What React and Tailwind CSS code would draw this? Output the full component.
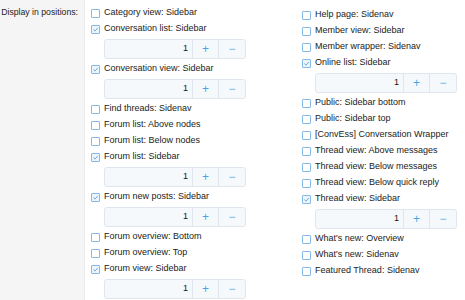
import React from 'react';

const leftItems = [
  { label: 'Category view: Sidebar' },
  { label: 'Conversation list: Sidebar', checked: true },
  { label: 'Conversation view: Sidebar', checked: true },
  { label: 'Find threads: Sidenav' },
  { label: 'Forum list: Above nodes' },
  { label: 'Forum list: Below nodes' },
  { label: 'Forum list: Sidebar', checked: true },
  { label: 'Forum new posts: Sidebar', checked: true },
  { label: 'Forum overview: Bottom' },
  { label: 'Forum overview: Top' },
  { label: 'Forum view: Sidebar', checked: true },
];

const rightItems = [
  { label: 'Help page: Sidenav' },
  { label: 'Member view: Sidebar' },
  { label: 'Member wrapper: Sidenav' },
  { label: 'Online list: Sidebar', checked: true },
  { label: 'Public: Sidebar bottom' },
  { label: 'Public: Sidebar top' },
  { label: '[ConvEss] Conversation Wrapper' },
  { label: 'Thread view: Above messages' },
  { label: 'Thread view: Below messages' },
  { label: 'Thread view: Below quick reply' },
  { label: 'Thread view: Sidebar', checked: true },
  { label: "What's new: Overview" },
  { label: "What's new: Sidenav" },
  { label: 'Featured Thread: Sidenav' },
];

function Checkbox({ checked }) {
  return (
    <span className={`w-[9px] h-[9px] shrink-0 flex items-center justify-center rounded-[1px] border border-[#86b9e3] ${checked ? 'bg-[#edf5fc]' : 'bg-white'}`}>
      {checked && (
        <svg width="7" height="7" viewBox="0 0 10 10" fill="none" stroke="#5aa3dc" strokeWidth="1.3">
          <path d="M2 5.2 L4.2 7.3 L8.2 2.8" />
        </svg>
      )}
    </span>
  );
}

function Spinner() {
  return (
    <div className="mt-[2px] mb-[2px] ml-[13px] h-[20px] w-[142px] flex rounded-[3px] border border-[#dfe6ee] bg-[#f6f9fc]">
      <div className="flex-1 flex items-center justify-end pr-[4px] text-[#141414]">1</div>
      <div className="w-[26px] flex items-center justify-center border-l border-[#dfe6ee] text-[#47a6e6] text-[12px]">+</div>
      <div className="w-[27px] flex items-center justify-center border-l border-[#dfe6ee] text-[#6fb5e8] text-[12px]">−</div>
    </div>
  );
}

function Item({ label, checked }) {
  return (
    <div>
      <div className="h-[16px] flex items-center gap-[4px]">
        <Checkbox checked={checked} />
        <span className="text-[#222] whitespace-nowrap">{label}</span>
      </div>
      {checked && <Spinner />}
    </div>
  );
}

export default function App() {
  return (
    <div className="w-[465px] h-[300px] flex bg-white text-[9px] overflow-hidden" style={{ fontFamily: '"Liberation Sans", Arial, sans-serif' }}>
      <div className="w-[85px] shrink-0 bg-[#f5f5f5] border-r border-[#ebebeb] text-right pr-[6px] pt-[6px] text-[8.7px] text-[#222] whitespace-nowrap">
        Display in positions:
      </div>
      <div className="flex-1 flex pl-[6px]">
        <div className="w-[211px] pt-[5px]">
          {leftItems.map((it) => <Item key={it.label} {...it} />)}
        </div>
        <div className="flex-1 pt-[7px]">
          {rightItems.map((it) => <Item key={it.label} {...it} />)}
        </div>
      </div>
    </div>
  );
}
